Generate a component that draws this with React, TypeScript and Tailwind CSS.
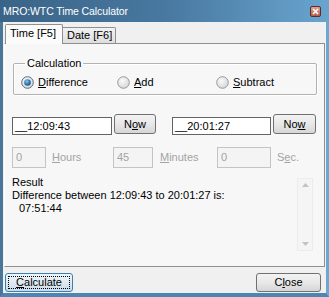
import React from 'react';

const font = { fontFamily: "'Liberation Sans', Arial, sans-serif" };

function Radio({ checked }: { checked?: boolean }) {
  return (
    <svg width="13" height="13" viewBox="0 0 13 13" className="shrink-0">
      <defs>
        <radialGradient id="rg" cx="40%" cy="35%" r="70%">
          <stop offset="0%" stopColor="#fbfbfb" />
          <stop offset="100%" stopColor="#d4d4d4" />
        </radialGradient>
        <radialGradient id="dot" cx="40%" cy="35%" r="70%">
          <stop offset="0%" stopColor="#8cc6ec" />
          <stop offset="60%" stopColor="#2a78b4" />
          <stop offset="100%" stopColor="#134d7c" />
        </radialGradient>
      </defs>
      <circle cx="6.5" cy="6.5" r="5.8" fill="url(#rg)" stroke={checked ? '#5b6a78' : '#9a9a9a'} strokeWidth="1" />
      {checked && <circle cx="6.5" cy="6.5" r="3.3" fill="url(#dot)" />}
    </svg>
  );
}

function U({ children }: { children: React.ReactNode }) {
  return <span className="underline underline-offset-[1px]">{children}</span>;
}

function Btn({ children, className = '' }: { children: React.ReactNode; className?: string }) {
  return (
    <button
      className={`flex items-center justify-center rounded-[3px] border border-[#707070] bg-gradient-to-b from-[#f3f3f3] via-[#e8e8e8] to-[#d6d6d6] text-[11px] text-black ${className}`}
    >
      {children}
    </button>
  );
}

export default function App() {
  return (
    <div className="w-[329px] h-[297px] flex flex-col overflow-hidden select-none" style={font}>
      {/* title bar */}
      <div className="h-[22px] shrink-0 flex items-center justify-between pl-[3px] pr-[8px] bg-gradient-to-r from-[#3a6487] via-[#4878a0] to-[#69a5cf]">
        <span className="text-white text-[10.5px] leading-none tracking-[-0.1px]">MRO:WTC Time Calculator</span>
        <div className="w-[11px] h-[11px] rounded-[2px] border border-[#5a2e28] bg-gradient-to-b from-[#e0a090] to-[#b85c4a] flex items-center justify-center">
          <svg width="7" height="7" viewBox="0 0 7 7">
            <path d="M1 1 L6 6 M6 1 L1 6" stroke="#ffffff" strokeWidth="1.6" />
          </svg>
        </div>
      </div>

      {/* body */}
      <div className="flex-1 flex flex-col bg-[#f0f0f0] border-l-[3px] border-l-[#4a7699] border-r-[3px] border-r-[#6aa8d2] border-b-[4px] border-b-[#4d86b2]">
        {/* tabs */}
        <div className="h-[21px] shrink-0 flex items-end pl-[2px]">
          <div className="relative z-10 -mb-px h-[20px] w-[58px] border border-b-0 border-[#8e8f8f] bg-[#fbfbfb] pl-[4px] pt-[2px] text-[11px] leading-[13px] text-black rounded-t-[2px]">
            Time [F5]
          </div>
          <div className="h-[16px] w-[53px] border border-b-0 border-l-0 border-[#8e8f8f] bg-gradient-to-b from-[#f2f2f2] to-[#dedede] pl-[4px] pt-[1px] text-[11px] leading-[13px] text-black rounded-tr-[2px]">
            Date [F6]
          </div>
        </div>

        {/* panel */}
        <div className="mx-[1px] h-[224px] shrink-0 border border-[#8e8f8f] border-l-white bg-[#f7f7f7] flex flex-col text-[11px] text-black">
          <fieldset className="ml-[8px] mt-[13px] w-[304px] border border-[#b2b2b2] rounded-[2px] px-[7px] pt-[6px] pb-[5px] shadow-[inset_1px_1px_0_#ffffff,1px_1px_0_#ffffff]">
            <legend className="ml-[4px] px-[2px] leading-[13px]">Calculation</legend>
            <div className="flex items-center h-[13px]">
              <div className="w-[96px] flex items-center gap-[4px]">
                <Radio checked />
                <span className="leading-[13px]"><U>D</U>ifference</span>
              </div>
              <div className="w-[99px] flex items-center gap-[4px]">
                <Radio />
                <span className="leading-[13px]"><U>A</U>dd</span>
              </div>
              <div className="flex items-center gap-[4px]">
                <Radio />
                <span className="leading-[13px]"><U>S</U>ubtract</span>
              </div>
            </div>
          </fieldset>

          {/* time entries */}
          <div className="mt-[19px] ml-[7px] flex items-start h-[21px]">
            <div className="mt-[3px] h-[18px] w-[100px] border border-[#646464] bg-white pl-[2px] leading-[16px] whitespace-pre">__12:09:43</div>
            <Btn className="ml-[2px] w-[42px] h-[20px]">N<U>o</U>w</Btn>
            <div className="ml-[16px] mt-[3px] h-[18px] w-[99px] border border-[#646464] bg-white pl-[2px] leading-[16px] whitespace-pre">__20:01:27</div>
            <Btn className="ml-[2px] w-[43px] h-[20px]">No<U>w</U></Btn>
          </div>

          {/* disabled row */}
          <div className="mt-[12px] ml-[7px] flex items-center h-[21px] text-[#a3a3a3]">
            <div className="w-[101px] flex items-center">
              <div className="h-[21px] w-[34px] border border-[#c4c4c4] bg-[#f4f4f4] pl-[3px] leading-[19px]">0</div>
              <span className="ml-[6px]"><U>H</U>ours</span>
            </div>
            <div className="w-[104px] flex items-center">
              <div className="h-[21px] w-[40px] border border-[#c4c4c4] bg-[#f4f4f4] pl-[3px] leading-[19px]">45</div>
              <span className="ml-[7px]"><U>M</U>inutes</span>
            </div>
            <div className="flex items-center">
              <div className="h-[21px] w-[54px] border border-[#c4c4c4] bg-[#f4f4f4] pl-[3px] leading-[19px]">0</div>
              <span className="ml-[6px]">S<U>e</U>c.</span>
            </div>
          </div>

          {/* result */}
          <div className="mt-[8px] ml-[7px] mr-[11px] flex">
            <div className="flex-1 leading-[13px]">
              <div>Result</div>
              <div>Difference between 12:09:43 to 20:01:27 is:</div>
              <div className="pl-[7px]">07:51:44</div>
            </div>
            <div className="mt-[2px] h-[73px] w-[16px] border border-[#ececec] bg-[#f5f5f5] flex flex-col items-center justify-between py-[4px]">
              <svg width="7" height="4" viewBox="0 0 7 4"><path d="M0 4 L3.5 0 L7 4 Z" fill="#c2c2c2" /></svg>
              <svg width="7" height="4" viewBox="0 0 7 4"><path d="M0 0 L3.5 4 L7 0 Z" fill="#c2c2c2" /></svg>
            </div>
          </div>
        </div>

        {/* bottom buttons */}
        <div className="mt-[6px] flex justify-between pl-[2px] pr-[5px]">
          <button className="w-[68px] h-[19px] rounded-[3px] border border-[#3c7fb1] bg-gradient-to-b from-[#eef6fb] via-[#dfeaf2] to-[#c9dbe8] p-[2px] text-[11px] text-black">
            <div className="h-full w-full border border-dotted border-black flex items-center justify-center">
              <U>C</U>alculate
            </div>
          </button>
          <Btn className="w-[65px] h-[19px]">C<U>l</U>ose</Btn>
        </div>
      </div>
    </div>
  );
}
